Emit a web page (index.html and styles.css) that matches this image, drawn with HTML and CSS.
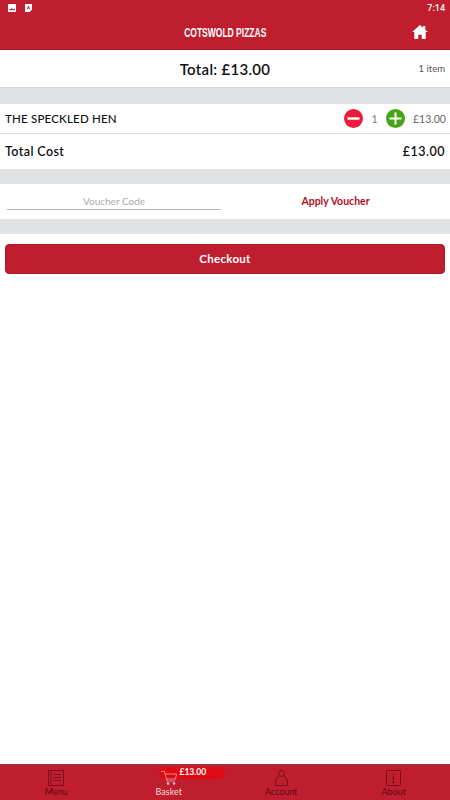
FILE: index.html
```html
<!DOCTYPE html>
<html lang="en">
<head>
    <meta charset="UTF-8">
    <meta name="viewport" content="width=device-width, initial-scale=1.0">
    <title>Basket</title>
    <link rel="stylesheet" href="styles.css">
</head>
<body>
    <div class="app">
        <div class="status-bar">
            <div class="status-icons">
                <svg width="8" height="8" viewBox="0 0 9 9"><rect width="9" height="9" rx="1" fill="#fff"/><path d="M1.500 7V5.500L3 6l1-1.500L5.500 6 7.500 5v2z" fill="#bf1e2e"/></svg>
                <svg width="7" height="8" viewBox="0 0 8 9"><path d="M0 0h8v6L5.500 9H0z" fill="#fff"/><path d="M2 6L4 1.500 6 6H4.800L4 4.300 3.200 6z" fill="#bf1e2e"/></svg>
            </div>
            <span class="clock">7:14</span>
        </div>
        <header class="top-bar">
            <h1 class="brand">COTSWOLD PIZZAS</h1>
            <svg class="home-icon" width="16" height="14" viewBox="0 0 18 16"><path d="M9 0L0 8h2.500v8H7v-5h4v5h4.500V8H18l-3-2.700V1h-2.500v2.100z" fill="#fff"/></svg>
        </header>

        <section class="summary">
            <div class="summary-total">Total: £13.00</div>
            <div class="summary-count">1 item</div>
        </section>

        <div class="spacer spacer-first"></div>

        <section class="basket">
            <div class="basket-row">
                <span class="item-name">THE SPECKLED HEN</span>
                <div class="item-controls">
                    <svg width="19" height="19" viewBox="0 0 19 19"><circle cx="9.500" cy="9.500" r="9.500" fill="#ee1c3c"/><rect x="3.500" y="8.300" width="12" height="2.400" fill="#fff"/></svg>
                    <span class="qty">1</span>
                    <svg width="19" height="19" viewBox="0 0 19 19"><circle cx="9.500" cy="9.500" r="9.500" fill="#44a514"/><rect x="3.500" y="8.500" width="12" height="2" fill="#fff"/><rect x="8.500" y="3.500" width="2" height="12" fill="#fff"/></svg>
                    <span class="item-price">£13.00</span>
                </div>
            </div>
            <div class="total-row">
                <span>Total Cost</span>
                <span class="total-value">£13.00</span>
            </div>
        </section>

        <div class="spacer"></div>

        <section class="voucher">
            <div class="voucher-input">Voucher Code</div>
            <div class="voucher-apply">Apply Voucher</div>
        </section>

        <div class="spacer"></div>

        <div class="checkout-wrap">
            <button class="checkout-btn">Checkout</button>
        </div>

        <nav class="tab-bar">
            <div class="tab">
                <svg width="16" height="16" viewBox="0 0 16 16" fill="none" stroke="#6e0d16" stroke-width="0.800"><rect x="0.500" y="0.500" width="15" height="15"/><path d="M3 0.500v15M5.500 4.500h7.500M5.500 7.500h7.500M5.500 10.500h7.500"/></svg>
                <span class="tab-label">Menu</span>
            </div>
            <div class="tab tab-active">
                <div class="basket-badge">£13.00</div>
                <svg class="cart-icon" width="16" height="16" viewBox="0 0 16 16" fill="none" stroke="#f0b4ba" stroke-width="0.700"><path d="M0 1.500h3.500L6 11h8M4 4h11.500l-1 5H5.500"/><circle cx="7" cy="13.500" r="1" fill="#f4c9cd"/><circle cx="13" cy="13.500" r="1" fill="#f4c9cd"/></svg>
                <span class="tab-label">Basket</span>
            </div>
            <div class="tab">
                <svg width="13" height="16" viewBox="0 0 13 16" fill="none" stroke="#6e0d16" stroke-width="0.900"><circle cx="6.500" cy="3.500" r="3"/><path d="M0.500 15.500v-3.500c0-3 2-5 3.500-5.500M12.500 15.500v-3.500c0-3-2-5-3.500-5.500M0.500 15.500h12"/></svg>
                <span class="tab-label">Account</span>
            </div>
            <div class="tab">
                <svg width="15" height="16" viewBox="0 0 15 16" fill="none" stroke="#6e0d16" stroke-width="0.900"><rect x="0.500" y="0.500" width="14" height="15" rx="1"/><path d="M7.500 3.500v1.500M6 7h1.500v5.500M6 12.500h3"/></svg>
                <span class="tab-label">About</span>
            </div>
        </nav>
    </div>
</body>
</html>
```

FILE: styles.css
```css
* {
    margin: 0;
    padding: 0;
    box-sizing: border-box;
}

body {
    font-family: Lato, "Open Sans", sans-serif;
    background: white;
    color: #111;
}

.app {
    width: 450px;
    height: 800px;
    display: flex;
    flex-direction: column;
    overflow: hidden;
}

.status-bar {
    height: 24px;
    background: #bf1e2e;
    display: flex;
    justify-content: space-between;
    align-items: flex-start;
    padding: 2px 5px 0 8px;
    flex-shrink: 0;
}

.status-icons {
    display: flex;
    gap: 9px;
    align-items: center;
    margin-top: 2px;
}

.clock {
    color: white;
    font-family: Roboto, sans-serif;
    font-size: 9px;
    font-weight: 500;
    line-height: 11px;
    margin-top: 1px;
}

.top-bar {
    height: 26px;
    background: #bf1e2e;
    border-bottom: 1px solid #a91624;
    display: flex;
    justify-content: center;
    align-items: flex-start;
    position: relative;
    flex-shrink: 0;
}

.brand {
    color: white;
    font-family: "Liberation Sans", sans-serif;
    font-size: 13.500px;
    font-weight: 700;
    line-height: 17px;
    transform: scaleX(0.63);
    white-space: nowrap;
}

.home-icon {
    position: absolute;
    right: 22px;
    top: 1px;
}

.summary {
    height: 38px;
    display: flex;
    align-items: center;
    justify-content: center;
    position: relative;
    border-bottom: 1px solid #d6d6d8;
    flex-shrink: 0;
}

.summary-total {
    font-size: 15px;
    font-weight: 600;
    letter-spacing: 0.300px;
}

.summary-count {
    position: absolute;
    right: 5px;
    top: 13px;
    font-size: 9.500px;
    color: #555;
}

.spacer {
    height: 15px;
    background: #e1e2e4;
    flex-shrink: 0;
}

.spacer-first {
    height: 16px;
}

.basket-row {
    height: 30px;
    display: flex;
    justify-content: space-between;
    align-items: center;
    padding: 0 5px;
    border-bottom: 1px solid #dcdcde;
}

.item-name {
    font-size: 11.500px;
    font-weight: 500;
    letter-spacing: 0.200px;
}

.item-controls {
    display: flex;
    align-items: center;
    color: #777;
    font-size: 10.500px;
}

.qty {
    width: 23px;
    text-align: center;
}

.item-price {
    width: 32px;
    margin-left: 8px;
    color: #666;
    text-align: right;
    white-space: nowrap;
}

.total-row {
    height: 35px;
    display: flex;
    justify-content: space-between;
    align-items: center;
    padding: 0 5px;
    font-size: 12.500px;
    font-weight: 600;
    letter-spacing: 0.400px;
}

.total-value {
    letter-spacing: 0.500px;
}

.voucher {
    height: 35px;
    display: flex;
    flex-shrink: 0;
}

.voucher-input {
    width: 214px;
    height: 26px;
    margin: 0 0 0 7px;
    padding-top: 11px;
    border-bottom: 1px solid #b5b5b5;
    text-align: center;
    color: #aaa;
    font-size: 10px;
    line-height: 13px;
}

.voucher-apply {
    flex: 1;
    text-align: center;
    color: #b3101f;
    font-size: 10.500px;
    font-weight: 700;
    padding: 11px 0 0 0;
    line-height: 13px;
}

.checkout-wrap {
    padding: 10px 5px;
    flex: 1;
}

.checkout-btn {
    width: 100%;
    height: 30px;
    background: #bf1e2e;
    border: 1px solid #ab1a28;
    border-radius: 4px;
    padding-bottom: 2px;
    color: white;
    font-family: inherit;
    font-size: 11.500px;
    font-weight: 700;
    letter-spacing: 0.300px;
}

.tab-bar {
    height: 36px;
    background: #bf1e2e;
    border-top: 1px solid #8d3a40;
    display: grid;
    grid-template-columns: repeat(4, 1fr);
    flex-shrink: 0;
}

.tab {
    display: flex;
    flex-direction: column;
    align-items: center;
    justify-content: flex-end;
    position: relative;
    padding-bottom: 3px;
    color: #5c0c13;
}

.tab-label {
    font-size: 9px;
    line-height: 11px;
}

.tab-active {
    color: #f6d5d8;
}

.basket-badge {
    position: absolute;
    top: 2px;
    left: 46px;
    width: 66px;
    height: 12px;
    padding-left: 21px;
    background: #e00a14;
    border-radius: 6px;
    color: white;
    font-size: 8.500px;
    font-weight: 700;
    line-height: 11px;
}

.cart-icon {
    position: relative;
}
```
